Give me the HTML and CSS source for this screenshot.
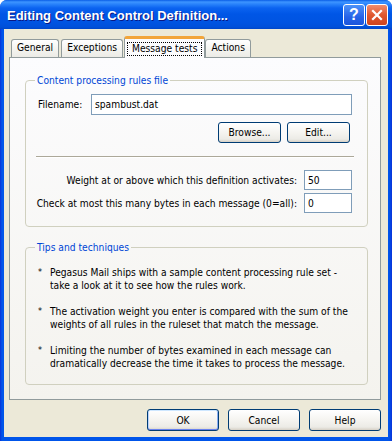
FILE: index.html
```html
<!DOCTYPE html>
<html lang="en">
<head>
    <meta charset="UTF-8">
    <title>Editing Content Control Definition...</title>
    <link rel="stylesheet" href="styles.css">
</head>
<body>
<div class="window">
    <div class="titlebar">
        <span class="title">Editing Content Control Definition...</span>
        <div class="caption-buttons">
            <span class="cap help">?</span>
            <span class="cap close">
                <svg width="12" height="12" viewBox="0 0 12 12">
                    <path d="M2 2 L10 10 M10 2 L2 10" stroke="#fff" stroke-width="2.2" stroke-linecap="square"/>
                </svg>
            </span>
        </div>
    </div>
    <div class="client">
        <div class="tabs">
            <div class="tab">General</div>
            <div class="tab">Exceptions</div>
            <div class="tab active"><span class="focus">Message tests</span></div>
            <div class="tab">Actions</div>
        </div>
        <div class="panel">
            <fieldset class="group rules">
                <legend>Content processing rules file</legend>
                <div class="group-body">
                    <div class="file-row">
                        <label for="filename">Filename:</label>
                        <input type="text" id="filename" value="spambust.dat">
                    </div>
                    <div class="btn-row">
                        <button class="btn small">Browse...</button>
                        <button class="btn small">Edit...</button>
                    </div>
                    <div class="sep"></div>
                    <div class="num-row">
                        <label for="weight">Weight at or above which this definition activates:</label>
                        <input type="text" id="weight" value="50">
                    </div>
                    <div class="num-row">
                        <label for="bytes">Check at most this many bytes in each message (0=all):</label>
                        <input type="text" id="bytes" value="0">
                    </div>
                </div>
            </fieldset>
            <fieldset class="group tips">
                <legend>Tips and techniques</legend>
                <ul class="tip-list">
                    <li><span class="star">*</span><span>Pegasus Mail ships with a sample content processing rule set -<br>take a look at it to see how the rules work.</span></li>
                    <li><span class="star">*</span><span>The activation weight you enter is compared with the sum of the<br>weights of all rules in the ruleset that match the message.</span></li>
                    <li><span class="star">*</span><span>Limiting the number of bytes examined in each message can<br>dramatically decrease the time it takes to process the message.</span></li>
                </ul>
            </fieldset>
        </div>
        <div class="footer">
            <button class="btn default">OK</button>
            <button class="btn">Cancel</button>
            <button class="btn">Help</button>
        </div>
    </div>
</div>
</body>
</html>
```

FILE: styles.css
```css
* {
    box-sizing: border-box;
}
body {
    margin: 0;
    font-family: "DejaVu Sans Condensed", "DejaVu Sans", sans-serif;
    font-size: 10.2px;
    color: #000;
    background: #fff;
}
.window {
    width: 392px;
    height: 441px;
    display: flex;
    flex-direction: column;
    background: linear-gradient(to right, #0831d9 0, #0055ea 2px, #0055ea 389px, #0831d9 392px);
    border-radius: 7px 7px 0 0;
    overflow: hidden;
}
.titlebar {
    height: 29px;
    display: flex;
    align-items: center;
    justify-content: space-between;
    padding: 0 4px 0 7px;
    background: linear-gradient(to bottom, #0a5ee6 0, #3d95ff 2px, #2a84fb 4px, #0b63f0 8px, #0056e6 14px, #0054e2 22px, #0050da 27px, #0046c8 29px);
}
.title {
    color: #fff;
    font-family: "Liberation Sans", sans-serif;
    font-weight: bold;
    font-size: 13px;
    text-shadow: 1px 1px #0a1883;
    margin-top: 1px;
}
.caption-buttons {
    display: flex;
    gap: 1px;
    margin-top: 1px;
}
.cap {
    width: 22px;
    height: 22px;
    border: 1px solid #fff;
    border-radius: 3px;
    display: flex;
    align-items: center;
    justify-content: center;
}
.help {
    background: linear-gradient(to bottom, #4d92f8, #2663e8 60%, #1b55dc);
    color: #fff;
    font-family: "Liberation Sans", sans-serif;
    font-weight: bold;
    font-size: 16px;
}
.close {
    background: linear-gradient(to bottom, #f08c6e, #e0582f 50%, #cc4420);
}
.client {
    flex: 1;
    margin: 0 4px 4px 4px;
    background: #ece9d8;
    padding: 7px 6px 0 5px;
    display: flex;
    flex-direction: column;
}
.tabs {
    height: 21px;
    display: flex;
    align-items: flex-end;
    padding-left: 2px;
}
.tab {
    height: 18px;
    line-height: 16px;
    padding: 0 5px;
    margin-right: 2px;
    border: 1px solid #919b9c;
    border-bottom: none;
    border-radius: 3px 3px 0 0;
    background: linear-gradient(to bottom, #fff, #f3f3ef 60%, #ecebe6);
}
.tab.active {
    position: relative;
    z-index: 1;
    height: 22px;
    margin: 0 0 -1px -1px;
    padding: 3px 2px 0;
    border-top: 3px solid #f2a53a;
    background: #fcfcfe;
    line-height: 12px;
}
.focus {
    display: block;
    padding: 0 4px;
    border: 1px dotted #000;
}
.panel {
    height: 343px;
    width: 372px;
    border: 1px solid #919b9c;
    background: linear-gradient(to bottom, #fcfcfe, #f4f3ee);
    padding: 16px 12px 0 15px;
}
.group {
    margin: 0;
    padding: 0;
    min-width: 0;
    border: 1px solid #d0d0bf;
    border-radius: 4px;
}
.group legend {
    color: #0046d5;
    padding: 0 2px;
    margin-left: 9px;
    line-height: 13px;
}
.group-body {
    padding: 7px 15px 13px 12px;
}
.file-row {
    display: flex;
    align-items: center;
}
.file-row label {
    width: 53px;
}
input {
    font: inherit;
    height: 20px;
    border: 1px solid #7f9db9;
    background: #fff;
    padding: 0 3px;
    margin: 0;
}
.file-row input {
    flex: 1;
    height: 21px;
}
.btn-row {
    display: flex;
    justify-content: flex-end;
    gap: 6px;
    margin: 7px 2px 0 0;
}
.btn {
    font: inherit;
    height: 22px;
    width: 72px;
    padding: 0;
    border: 1px solid #003c74;
    border-radius: 3px;
    background: linear-gradient(to bottom, #fff 0%, #f5f4f0 50%, #ecebe6 85%, #d6d0c5 100%);
    color: #000;
}
.btn.small {
    width: 63px;
    height: 21px;
}
.btn.default {
    box-shadow: inset 0 1px 0 #cee7ff, inset 0 -1px 0 #6982ee, inset 1px 0 0 #b8d2ff, inset -1px 0 0 #89adf1;
}
.sep {
    margin: 13px -2px 0;
    height: 2px;
    border-top: 1px solid #aca899;
    border-bottom: 1px solid #fff;
}
.num-row {
    display: flex;
    align-items: center;
    justify-content: flex-end;
    gap: 7px;
    margin-top: 3px;
}
.num-row label {
    white-space: nowrap;
    flex: none;
}
.sep + .num-row {
    margin-top: 12px;
}
.num-row input {
    width: 48px;
}
.tips {
    margin-top: 14px;
}
.tip-list {
    list-style: none;
    margin: 0;
    padding: 12px 8px 14px 12px;
    line-height: 13px;
}
.tip-list li {
    display: flex;
    margin-bottom: 13px;
}
.tip-list li:last-child {
    margin-bottom: 0;
}
.star {
    width: 12px;
    flex: none;
    font-size: 9px;
}
.footer {
    display: flex;
    justify-content: flex-end;
    gap: 9px;
    padding: 9px 1px 0 0;
}
```
